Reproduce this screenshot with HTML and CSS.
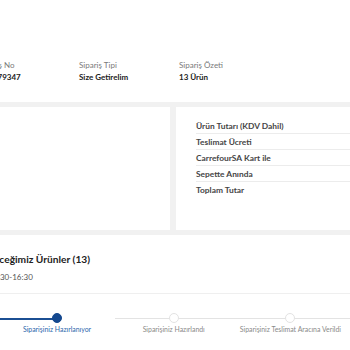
FILE: index.html
```html
<!DOCTYPE html>
<html lang="tr">
<head>
  <meta charset="UTF-8" />
  <meta name="viewport" content="width=device-width, initial-scale=1.0" />
  <title>Sipariş Detayı</title>
  <link rel="stylesheet" href="styles.css">
</head>
<body>
  <div class="sayfa">
    <div class="ozet-bilgi">
      <div class="bilgi">
        <span class="etiket">Sipariş No</span>
        <span class="deger">100079347</span>
      </div>
      <div class="bilgi">
        <span class="etiket">Sipariş Tipi</span>
        <span class="deger">Size Getirelim</span>
      </div>
      <div class="bilgi">
        <span class="etiket">Sipariş Özeti</span>
        <span class="deger">13 Ürün</span>
      </div>
    </div>

    <div class="paneller">
      <div class="panel panel-sol"></div>
      <div class="panel panel-sag">
        <div class="satir">Ürün Tutarı (KDV Dahil)</div>
        <div class="satir">Teslimat Ücreti</div>
        <div class="satir">CarrefourSA Kart ile</div>
        <div class="satir">Sepette Anında</div>
        <div class="satir">Toplam Tutar</div>
      </div>
    </div>

    <div class="urunler">
      <h3>Getireceğimiz Ürünler (13)</h3>
      <p class="saat">Bugün 15:30-16:30</p>
    </div>

    <div class="adimlar">
      <div class="adim tamam"><span class="nokta"></span><span class="adim-yazi">Siparişiniz Alındı</span></div>
      <div class="adim aktif"><span class="nokta"></span><span class="adim-yazi">Siparişiniz Hazırlanıyor</span></div>
      <div class="adim"><span class="nokta"></span><span class="adim-yazi">Siparişiniz Hazırlandı</span></div>
      <div class="adim"><span class="nokta"></span><span class="adim-yazi">Siparişiniz Teslimat Aracına Verildi</span></div>
      <div class="adim"><span class="nokta"></span><span class="adim-yazi">Siparişiniz Teslim Edildi</span></div>
    </div>
  </div>
</body>
</html>
```

FILE: styles.css
```css
* {
  box-sizing: border-box;
}

html, body {
  margin: 0;
  padding: 0;
  background-color: #fff;
  font-family: Lato, 'Open Sans', sans-serif;
  overflow: hidden;
}

.sayfa {
  width: 600px;
  margin-left: -36px;
}

.ozet-bilgi {
  display: flex;
  padding: 59px 0 0 15px;
  height: 102px;
}

.bilgi {
  width: 100px;
  display: flex;
  flex-direction: column;
}

.etiket {
  font-size: 8px;
  line-height: 12px;
  color: #7a7a7a;
}

.deger {
  font-size: 8px;
  line-height: 12px;
  font-weight: bold;
  color: #222;
}

.paneller {
  display: flex;
  gap: 6px;
  background-color: #f1f1f1;
  padding: 5px 0;
}

.panel {
  background-color: #fff;
  height: 123px;
}

.panel-sol {
  width: 206px;
}

.panel-sag {
  flex: 1;
  padding: 11px 0 0 20px;
}

.satir {
  height: 16px;
  line-height: 16px;
  font-size: 8.4px;
  font-weight: bold;
  color: #454545;
  border-bottom: 1px solid #ececec;
}

.satir:last-child {
  border-bottom: none;
}

.urunler {
  padding: 16px 0 10px;
  border-bottom: 1px solid #efefef;
}

.urunler h3 {
  margin: 0 0 0 7px;
  font-size: 10.2px;
  line-height: 16px;
  color: #222;
}

.saat {
  margin: 4px 0 0 0;
  font-size: 8px;
  line-height: 12px;
  color: #555;
}

.adimlar {
  display: flex;
  margin: 19px 0 0 -82px;
}

.adim {
  position: relative;
  width: 116.7px;
  display: flex;
  flex-direction: column;
  align-items: center;
}

.adim::before {
  content: '';
  position: absolute;
  top: 5px;
  left: 0;
  right: 0;
  height: 1px;
  background-color: #e3e3e3;
}

.adim.tamam::before,
.adim.aktif::before {
  background-color: #1b4f93;
  height: 1.5px;
}

.adim.aktif::before {
  right: 50%;
}

.nokta {
  position: relative;
  width: 10px;
  height: 10px;
  border-radius: 50%;
  background-color: #fff;
  border: 1px solid #e3e3e3;
}

.adim.tamam .nokta,
.adim.aktif .nokta {
  background-color: #14488f;
  border-color: #14488f;
}

.adim-yazi {
  margin-top: 2px;
  font-size: 6.9px;
  line-height: 8px;
  color: #8a8a8a;
  white-space: nowrap;
}

.adim.aktif .adim-yazi {
  color: #2d67ad;
}
```
